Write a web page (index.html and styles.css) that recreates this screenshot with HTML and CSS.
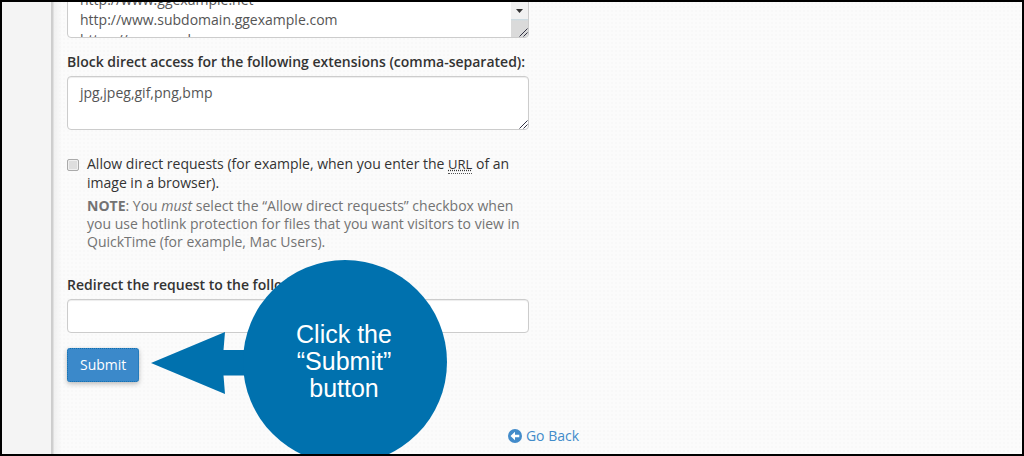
FILE: index.html
```html
<!DOCTYPE html>
<html lang="en">
<head>
<meta charset="utf-8">
<title>Hotlink Protection</title>
<link rel="stylesheet" href="styles.css">
</head>
<body>
<div class="frame">
  <aside class="sidebar"></aside>
  <main class="main">
    <form class="form">
      <div class="field urls">
        <textarea class="control" aria-label="URLs to allow access">http://www.ggexample.net
http://www.subdomain.ggexample.com
https://ggexample.com</textarea>
        <div class="scroll"><svg class="arrow" width="9" height="5" viewBox="0 0 9 5"><path d="M1 0h7L4.5 4z" fill="#333"/></svg></div>
        <svg class="grip" width="9" height="9" viewBox="0 0 9 9"><path d="M0.500 8.500L8.500 0.500M4.500 8.500L8.500 4.500" stroke="#334" fill="none"/></svg>
      </div>
      <label class="label" for="ext">Block direct access for the following extensions (comma-separated):</label>
      <div class="field">
        <textarea class="control" id="ext">jpg,jpeg,gif,png,bmp</textarea>
        <svg class="grip" width="9" height="9" viewBox="0 0 9 9"><path d="M0.500 8.500L8.500 0.500M4.500 8.500L8.500 4.500" stroke="#334" fill="none"/></svg>
      </div>
      <div class="check">
        <input class="tick" type="checkbox" id="allow">
        <div>
          <label class="check-label" for="allow">Allow direct requests (for example, when you enter the <abbr class="abbr" title="Universal Resource Locator">URL</abbr> of an image in a browser).</label>
          <p class="note"><strong>NOTE</strong>: You <em>must</em> select the “Allow direct requests” checkbox when you use hotlink protection for files that you want visitors to view in QuickTime (for example, Mac Users).</p>
        </div>
      </div>
      <label class="label" for="redirect">Redirect the request to the following URL:</label>
      <input class="control line" type="text" id="redirect">
      <button class="submit" type="button">Submit</button>
    </form>
    <div class="back">
      <a class="back-link" href="#"><svg width="14" height="14" viewBox="0 0 14 14"><circle cx="7" cy="7" r="7" fill="#428bca"/><path d="M2.500 7L7 2.700V5.700H11.300V8.300H7V11.300z" fill="#fff"/></svg>Go Back</a>
    </div>
  </main>
  <div class="callout">
    <svg class="callout-shape" width="296" height="204" viewBox="0 0 296 204"><path d="M0 103L74 72L72.500 90H96V115.500H72.500L74 134z" fill="#0071ae"/><circle cx="194" cy="102" r="102" fill="#0071ae"/></svg>
    <p class="callout-text">Click the<br>“Submit”<br>button</p>
  </div>
</div>
</body>
</html>
```
FILE: styles.css
```css
* { box-sizing: border-box; }
body {
  margin: 0;
  color: #333;
  font: 14px/20px "Open Sans", "Noto Sans", sans-serif;
}
.frame {
  position: relative;
  display: flex;
  height: 100vh;
  overflow: hidden;
  border: 2px solid #000;
}
.sidebar {
  width: 49px;
  flex: none;
  background: #f4f4f4;
}
.main {
  flex: 1;
  padding: 0 2px 0 16px;
  background:
    linear-gradient(90deg, #ccc 0, #d0d0d0 2px, #f0f0f0 3px, rgba(250, 250, 250, 0) 11px) no-repeat,
    radial-gradient(circle at 1px 1px, #f8f8f8 1px, transparent 1px) 0 0 / 4px 4px,
    #fbfbfb;
}
.form {
  max-width: 462px;
  margin-top: -19px;
}
.field {
  position: relative;
  height: 54px;
}
.urls { height: 55px; margin-bottom: 14px; }
.control {
  display: block;
  width: 100%;
  height: 100%;
  padding: 6px 12px;
  border: 1px solid #ccc;
  border-radius: 4px;
  background: #fff;
  box-shadow: inset 0 1px 1px rgba(0, 0, 0, 0.075);
  color: #555;
  font: inherit;
  resize: none;
  overflow: hidden;
}
.line { height: 34px; }
.scroll {
  position: absolute;
  right: 1px;
  bottom: 1px;
  width: 17px;
  height: 36px;
  border-radius: 0 0 3px 0;
  background: linear-gradient(#f1f1f1 18px, #c9dbe3 18px, #dadada 20px);
}
.arrow {
  position: absolute;
  top: 8px;
  left: 4px;
}
.grip {
  position: absolute;
  right: 1px;
  bottom: 1px;
}
.label {
  display: block;
  margin-bottom: 4px;
  font-weight: 600;
}
.check {
  display: flex;
  gap: 8px;
  margin: 24px 0;
}
.tick {
  appearance: none;
  flex: none;
  width: 12px;
  height: 12px;
  margin: 5px 0 0;
  border: 1px solid #aaa;
  border-radius: 2px;
  background: #dedede;
  box-shadow: inset 0 0 0 1px #f0f0f0;
}
.check-label {
  display: block;
  line-height: 19px;
}
.abbr {
  font-size: 13px;
  line-height: 1;
  text-decoration: underline dotted;
  border-bottom: 1px dotted #555;
}
.note {
  margin: 5px 0 0;
  color: #737373;
  line-height: 18px;
}
.submit {
  height: 34px;
  margin-top: 15px;
  padding: 0 12px;
  border: 1px dotted #0f6fae;
  border-radius: 3px;
  background: #3b89ca;
  box-shadow: 0 2px 5px rgba(0, 0, 0, 0.25);
  color: #fff;
  font: inherit;
}
.back {
  display: flex;
  justify-content: center;
  margin-top: 44px;
}
.back-link {
  display: flex;
  align-items: center;
  gap: 4px;
  color: #428bca;
  text-decoration: none;
}
.callout {
  position: absolute;
  left: 149px;
  top: 258px;
  width: 296px;
  height: 204px;
}
.callout-shape { display: block; }
.callout-text {
  position: absolute;
  top: 61px;
  right: 0;
  width: 206px;
  margin: 0;
  color: #fff;
  font: 25px/27px "Liberation Sans", Arial, sans-serif;
  text-align: center;
}
```
